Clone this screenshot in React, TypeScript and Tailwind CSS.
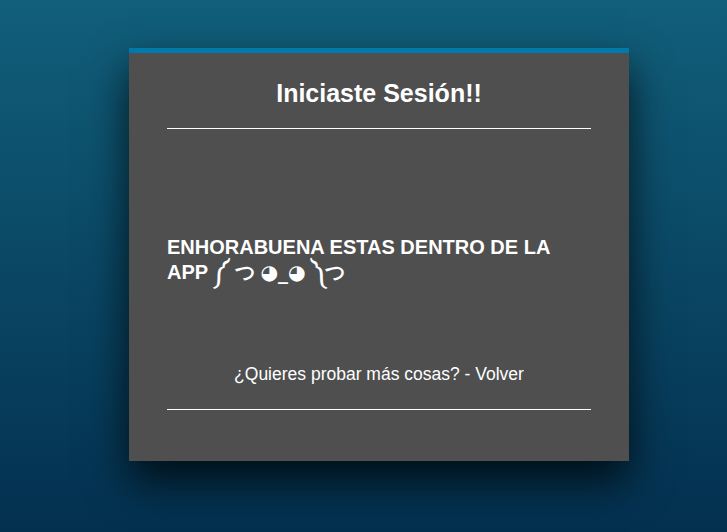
import React from "react";

export default function App() {
  return (
    <div className="min-h-[532px] w-full pt-[48px] pl-[129px] bg-[linear-gradient(to_bottom,#115f7b,#03304f)] font-['Liberation_Sans',Arial,sans-serif]">
      <div className="flex w-[500px] flex-col border-t-[5px] border-[#0079ad] bg-[#4f4f4f] px-[38px] pt-[25px] pb-[51px] text-white shadow-[0_20px_40px_rgba(0,0,0,0.75)]">
        <h2 className="text-center text-[25px] font-bold leading-[30px]">Iniciaste Sesión!!</h2>
        <div className="mt-[20px] h-px bg-white" />
        <h3 className="mt-[106px] text-[20px] font-bold leading-[25px]">
          ENHORABUENA ESTAS DENTRO DE LA APP ༼ つ <span className="font-['DejaVu_Sans',sans-serif]">◕_◕</span> ༽つ
        </h3>
        <p className="mt-[77px] text-center text-[17.5px] leading-[24px]">¿Quieres probar más cosas? - Volver</p>
        <div className="mt-[23px] h-px bg-white" />
      </div>
    </div>
  );
}
